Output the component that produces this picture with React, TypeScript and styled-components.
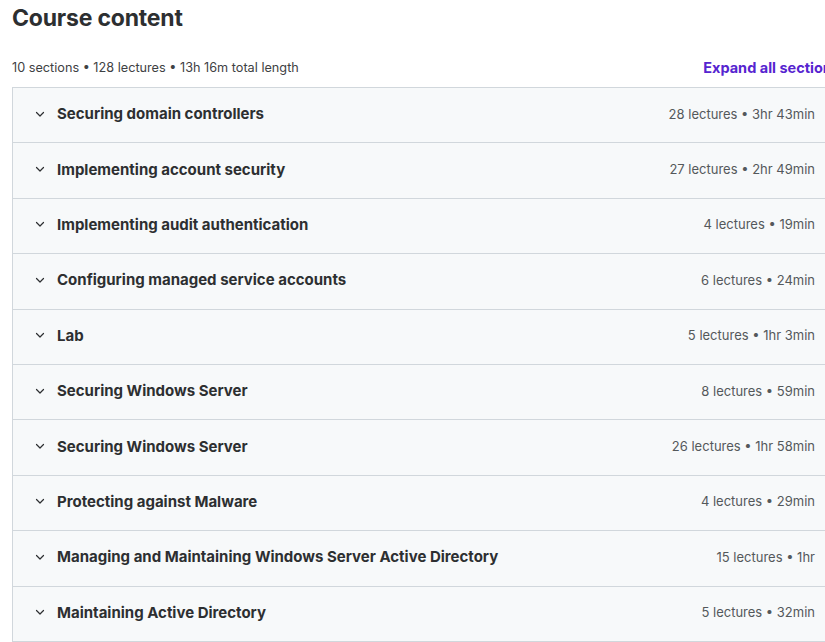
import React from "react";
import styled, { createGlobalStyle } from "styled-components";

const Global = createGlobalStyle`
  html, body { margin: 0; padding: 0; background: #fff; overflow: hidden; }
  body { font-family: Inter, "Noto Sans", sans-serif; color: #2d2f31; }
`;

const Page = styled.div`
  width: 828px;
  padding: 0 0 0 12px;
`;

const Title = styled.h2`
  margin: 0;
  padding-top: 4px;
  font-size: 23px;
  font-weight: 700;
  line-height: 28px;
  letter-spacing: -0.2px;
`;

const Header = styled.div`
  display: flex;
  align-items: center;
  justify-content: space-between;
  margin-top: 25px;
  height: 20px;
  margin-bottom: 10px;
`;

const Summary = styled.span`
  font-size: 12.7px;
  color: #3e4143;
`;

const ExpandLink = styled.button`
  border: 0;
  background: none;
  padding: 0;
  font-family: inherit;
  font-size: 14.5px;
  font-weight: 700;
  color: #5624d0;
  cursor: pointer;
  white-space: nowrap;
`;

const Panel = styled.div`
  border: 1px solid #d1d7dc;
  border-bottom: 0;
`;

const Row = styled.div`
  display: flex;
  align-items: center;
  box-sizing: border-box;
  height: 55.4px;
  padding: 0 24px 3px 22px;
  background: #f7f9fa;
  border-bottom: 1px solid #d1d7dc;
`;

const Chevron = styled.span`
  display: inline-flex;
  width: 10px;
  margin-right: 12px;
  color: #2d2f31;
`;

const SectionTitle = styled.span`
  flex: 1;
  font-size: 15px;
  font-weight: 650;
  color: #2d2f31;
`;

const Meta = styled.span`
  font-size: 13px;
  color: #54585b;
`;

const sections: [string, string][] = [
  ["Securing domain controllers", "28 lectures • 3hr 43min"],
  ["Implementing account security", "27 lectures • 2hr 49min"],
  ["Implementing audit authentication", "4 lectures • 19min"],
  ["Configuring managed service accounts", "6 lectures • 24min"],
  ["Lab", "5 lectures • 1hr 3min"],
  ["Securing Windows Server", "8 lectures • 59min"],
  ["Securing Windows Server", "26 lectures • 1hr 58min"],
  ["Protecting against Malware", "4 lectures • 29min"],
  ["Managing and Maintaining Windows Server Active Directory", "15 lectures • 1hr"],
  ["Maintaining Active Directory", "5 lectures • 32min"],
];

export default function App() {
  return (
    <Page>
      <Global />
      <Title>Course content</Title>
      <Header>
        <Summary>10 sections • 128 lectures • 13h 16m total length</Summary>
        <ExpandLink>Expand all sections</ExpandLink>
      </Header>
      <Panel>
        {sections.map(([t, m], i) => (
          <Row key={i}>
            <Chevron>
              <svg width="10" height="10" viewBox="0 0 10 10" fill="none">
                <path d="M1.5 3.5 L5 7 L8.5 3.5" stroke="currentColor" strokeWidth="1.2" strokeLinecap="round" strokeLinejoin="round" />
              </svg>
            </Chevron>
            <SectionTitle>{t}</SectionTitle>
            <Meta>{m}</Meta>
          </Row>
        ))}
      </Panel>
    </Page>
  );
}
